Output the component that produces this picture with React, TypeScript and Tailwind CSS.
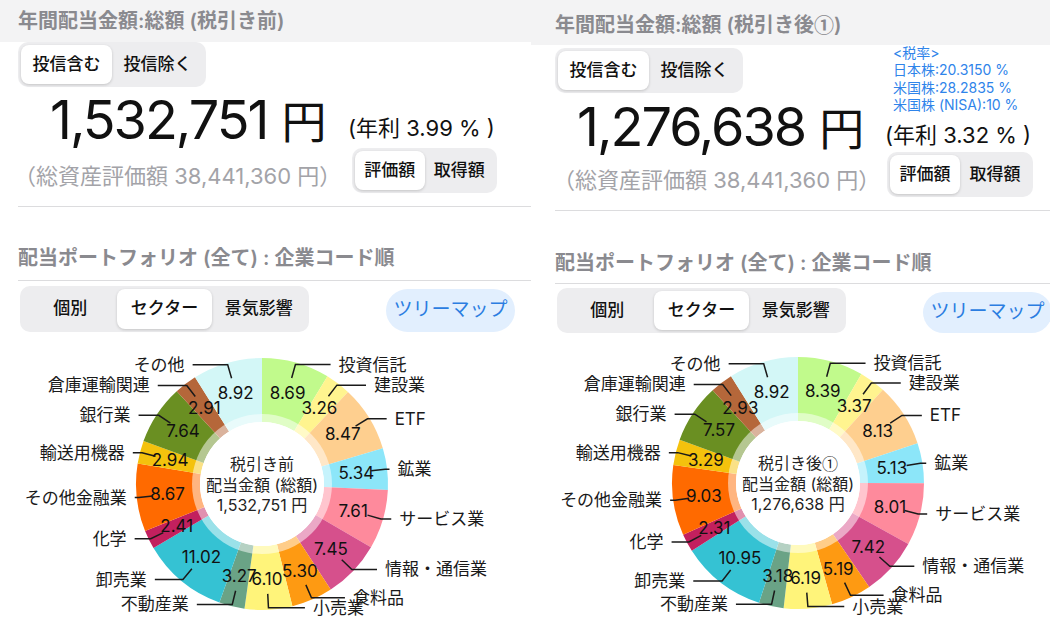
import React from 'react';

const FONT = "font-['Inter','Noto_Sans_CJK_JP',sans-serif]";

const NAMES = [
  '投資信託', '建設業', 'ETF', '鉱業', 'サービス業', '情報・通信業', '食料品', '小売業',
  '不動産業', '卸売業', '化学', 'その他金融業', '輸送用機器', '銀行業', '倉庫運輸関連', 'その他',
];

const COLORS = [
  '#c1fa8c', '#fff48f', '#fecf8f', '#8ce6f9', '#fe8a9c', '#d6508c', '#fe9a12', '#fff47a',
  '#6aa386', '#35c2d3', '#c2205e', '#ff6a00', '#f4c20d', '#6a8f22', '#b5673a', '#d3f7f7',
];

const BEFORE = [8.69, 3.26, 8.47, 5.34, 7.61, 7.45, 5.3, 6.1, 3.27, 11.02, 2.41, 8.67, 2.94, 7.64, 2.91, 8.92];
const AFTER = [8.39, 3.37, 8.13, 5.13, 8.01, 7.42, 5.19, 6.19, 3.18, 10.95, 2.31, 9.03, 3.29, 7.57, 2.93, 8.92];

interface SegmentedProps {
  items: string[];
  active: number;
  className?: string;
}

const Segmented: React.FC<SegmentedProps> = ({ items, active, className = '' }) => (
  <div className={`flex rounded-[10px] bg-[#ededef] p-[3px] ${className}`}>
    {items.map((t, i) => (
      <div
        key={t}
        className={`flex flex-1 items-center justify-center rounded-[8px] text-[17px] font-medium text-[#111] ${
          i === active ? 'bg-white shadow-[0_1px_3px_rgba(0,0,0,0.18)]' : ''
        }`}
      >
        {t}
      </div>
    ))}
  </div>
);

interface DonutProps {
  values: number[];
  width: number;
  cx: number;
  cy: number;
  center: React.ReactNode[];
}

const Donut: React.FC<DonutProps> = ({ values, width, cx, cy, center }) => {
  const total = values.reduce((a, b) => a + b, 0);
  const R = 126;
  const hole = 62;
  const at = (a: number, r: number) => [cx + Math.sin(a) * r, cy - Math.cos(a) * r];

  let acc = 0;
  const slices = values.map((v, i) => {
    const a0 = (acc / total) * Math.PI * 2;
    acc += v;
    const a1 = (acc / total) * Math.PI * 2;
    const mid = (a0 + a1) / 2;
    const large = a1 - a0 > Math.PI ? 1 : 0;
    const [ox0, oy0] = at(a0, R);
    const [ox1, oy1] = at(a1, R);
    const [ix1, iy1] = at(a1, hole);
    const [ix0, iy0] = at(a0, hole);
    const d = `M${ox0},${oy0} A${R},${R} 0 ${large} 1 ${ox1},${oy1} L${ix1},${iy1} A${hole},${hole} 0 ${large} 0 ${ix0},${iy0} Z`;

    // label line: part1 along the angle, part2 horizontal (variable length)
    const right = Math.sin(mid) >= 0;
    const p0 = at(mid, 110);
    const p1 = at(mid, 124);
    const len = 36.5 * Math.abs(Math.cos(mid));
    const p2x = p1[0] + (right ? len : -len);
    const val = at(mid, 95);
    return { d, color: COLORS[i], name: NAMES[i], v, p0, p1, p2x, right, val };
  });

  return (
    <svg width={width} height={284} className="block">
      {slices.map((s) => (
        <path key={s.name} d={s.d} fill={s.color} />
      ))}
      <circle cx={cx} cy={cy} r={70} fill="#fff" fillOpacity={0.5} />
      <circle cx={cx} cy={cy} r={hole} fill="#fff" />
      {slices.map((s) => (
        <g key={s.name + 'l'}>
          <polyline
            points={`${s.p0[0]},${s.p0[1]} ${s.p1[0]},${s.p1[1]} ${s.p2x},${s.p1[1]}`}
            fill="none"
            stroke="#1a1a1a"
            strokeWidth={1.5}
          />
          <text
            x={s.p2x + (s.right ? 8 : -8)}
            y={s.p1[1]}
            textAnchor={s.right ? 'start' : 'end'}
            dominantBaseline="central"
            fontSize={17}
            fill="#1a1a1a"
          >
            {s.name}
          </text>
        </g>
      ))}
      {slices.map((s) => (
        <text
          key={s.name + 'v'}
          x={s.val[0]}
          y={s.val[1]}
          textAnchor="middle"
          dominantBaseline="central"
          fontSize={17}
          fill="#111"
        >
          {s.v.toFixed(2)}
        </text>
      ))}
      {center.map((t, i) => (
        <text
          key={i}
          x={cx}
          y={cy - 20 + i * 20.5}
          textAnchor="middle"
          dominantBaseline="central"
          fontSize={16}
          fill="#222"
        >
          {t}
        </text>
      ))}
    </svg>
  );
};

const TreemapButton: React.FC<{ className?: string }> = ({ className = '' }) => (
  <div
    className={`flex w-[129px] shrink-0 items-center justify-center rounded-full bg-[#e2effe] text-[19px] text-[#2b7de1] ${className}`}
  >
    ツリーマップ
  </div>
);

const BigAmount: React.FC<{ value: string; className?: string }> = ({ value, className = '' }) => (
  <div className={`whitespace-nowrap text-[54px] leading-[54px] tracking-[-2px] text-[#111] ${className}`}>
    {value}
    <span className="ml-[14px] text-[45px] tracking-normal">円</span>
  </div>
);

const LeftPanel = () => (
  <div className="flex w-[531px] shrink-0 flex-col">
    <div className="flex h-[42px] items-center bg-[#f3f3f4] pl-[18px] text-[20px] font-semibold text-[#8a8a8f]">
      年間配当金額:総額 (税引き前)
    </div>
    <div className="flex h-[164px]">
      <div className="flex w-[348px] flex-col pl-[18px]">
        <Segmented items={['投信含む', '投信除く']} active={0} className="h-[45px] w-[188px]" />
        <BigAmount value="1,532,751" className="ml-[32px] mt-[6px]" />
        <div className="-ml-[4px] mt-[12px] whitespace-nowrap text-[22px] leading-[28px] text-[#a3a3a8]">
          （総資産評価額 38,441,360 円）
        </div>
      </div>
      <div className="flex flex-col pt-[72px]">
        <div className="whitespace-nowrap text-[22px] leading-[28px] text-[#111]">(年利 3.99 % )</div>
        <Segmented items={['評価額', '取得額']} active={0} className="ml-[4px] mt-[6px] h-[45px] w-[145px]" />
      </div>
    </div>
    <div className="ml-[18px] h-px bg-[#dcdcde]" />
    <div className="pb-[9px] pl-[18px] pt-[38px] text-[20px] font-semibold leading-[26px] text-[#8a8a8f]">
      配当ポートフォリオ (全て) : 企業コード順
    </div>
    <div className="ml-[18px] h-px bg-[#dcdcde]" />
    <div className="mt-[5px] flex items-end justify-between pl-[20px] pr-[16px]">
      <Segmented items={['個別', 'セクター', '景気影響']} active={1} className="h-[46px] w-[289px]" />
      <TreemapButton className="h-[43px]" />
    </div>
    <div className="mt-[8px]">
      <Donut values={BEFORE} width={531} cx={262} cy={144} center={['税引き前', '配当金額 (総額)', '1,532,751 円']} />
    </div>
  </div>
);

const RightPanel = () => (
  <div className="flex min-w-0 flex-1 flex-col overflow-hidden">
    <div className="flex h-[45px] items-center bg-[#f3f3f4] pl-[24px] pt-[4px] text-[20px] font-semibold text-[#8a8a8f]">
      年間配当金額:総額 (税引き後<span className="font-['Noto_Sans_CJK_JP']">①</span>)
    </div>
    <div className="flex h-[165px]">
      <div className="flex w-[354px] shrink-0 flex-col pl-[24px]">
        <Segmented items={['投信含む', '投信除く']} active={0} className="mt-[3px] h-[45px] w-[188px]" />
        <BigAmount value="1,276,638" className="ml-[22px] mt-[7px]" />
        <div className="-ml-[2px] mt-[9px] whitespace-nowrap text-[22px] leading-[28px] text-[#a3a3a8]">
          （総資産評価額 38,441,360 円）
        </div>
      </div>
      <div className="flex flex-col">
        <div className="-mt-[1px] ml-[8px] text-[14px] leading-[17.3px] text-[#2f84ea]">
          <div>&lt;税率&gt;</div>
          <div>日本株:20.3150 %</div>
          <div>米国株:28.2835 %</div>
          <div>米国株 (NISA):10 %</div>
        </div>
        <div className="mt-[8px] whitespace-nowrap text-[22px] leading-[28px] text-[#111]">(年利 3.32 % )</div>
        <Segmented items={['評価額', '取得額']} active={0} className="ml-[2px] mt-[3px] h-[45px] w-[146px]" />
      </div>
    </div>
    <div className="ml-[24px] h-px bg-[#dcdcde]" />
    <div className="pb-[7px] pl-[24px] pt-[39px] text-[20px] font-semibold leading-[26px] text-[#8a8a8f]">
      配当ポートフォリオ (全て) : 企業コード順
    </div>
    <div className="ml-[24px] h-px bg-[#dcdcde]" />
    <div className="mt-[4px] flex items-end justify-between pl-[26px] pr-0">
      <Segmented items={['個別', 'セクター', '景気影響']} active={1} className="h-[45px] w-[289px]" />
      <TreemapButton className="-mr-[2px] h-[41px]" />
    </div>
    <div className="mt-[7px]">
      <Donut
        values={AFTER}
        width={519}
        cx={267}
        cy={143}
        center={[
          <>
            税引き後<tspan fontFamily="Noto Sans CJK JP">①</tspan>
          </>,
          '配当金額 (総額)',
          '1,276,638 円',
        ]}
      />
    </div>
  </div>
);

export default function App() {
  return (
    <div className={`flex h-[624px] w-[1050px] overflow-hidden bg-white ${FONT}`}>
      <LeftPanel />
      <RightPanel />
    </div>
  );
}
